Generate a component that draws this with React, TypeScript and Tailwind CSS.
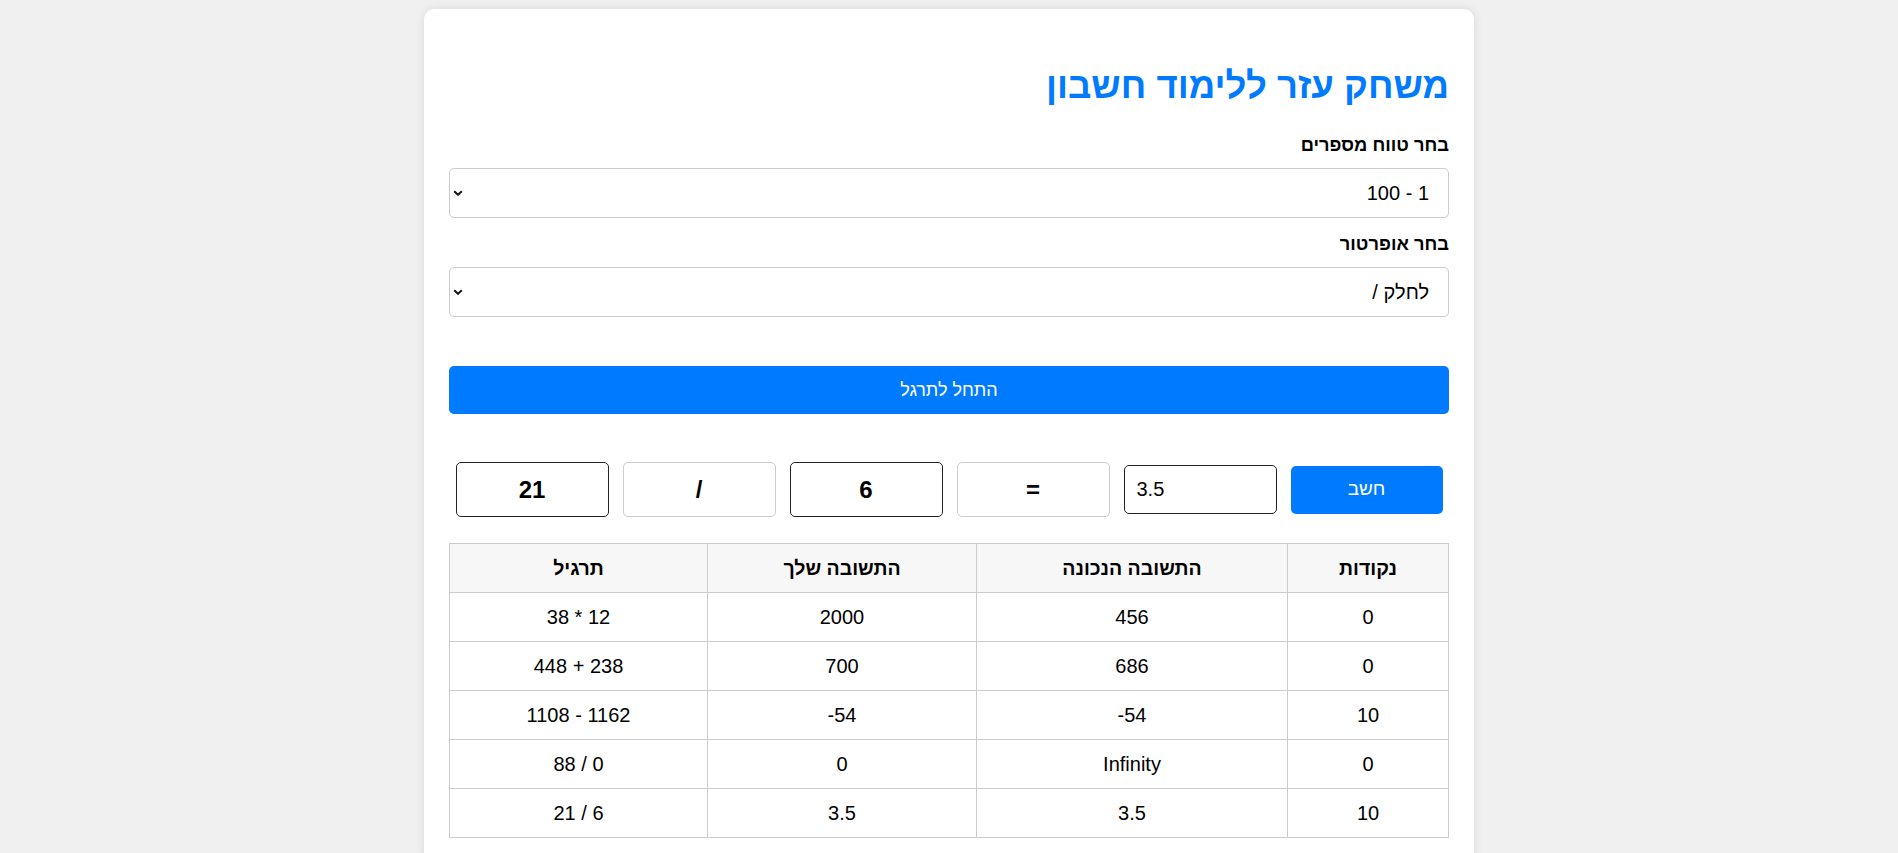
import React from "react";

const rows: [string, string, string, string][] = [
  ["0", "456", "2000", "38 * 12"],
  ["0", "686", "700", "448 + 238"],
  ["10", "-54", "-54", "1108 - 1162"],
  ["0", "Infinity", "0", "88 / 0"],
  ["10", "3.5", "3.5", "21 / 6"],
];

function Chevron() {
  return (
    <svg
      className="pointer-events-none absolute left-[4px] top-1/2 -translate-y-1/2"
      width="10"
      height="6"
      viewBox="0 0 10 6"
      fill="none"
    >
      <path d="M1.2 1.2L5 4.8L8.8 1.2" stroke="#111" strokeWidth="1.9" />
    </svg>
  );
}

function Field({ label, value }: { label: string; value: string }) {
  return (
    <div className="flex flex-col">
      <label className="mb-[12px] text-[18.3px] font-bold leading-[23px]">{label}</label>
      <div className="relative">
        <select
          className="h-[50px] w-full appearance-none rounded-[5px] border border-[#ccc] bg-white pr-[19px] text-[20px] text-black"
          defaultValue={value}
        >
          <option value={value}>{value}</option>
        </select>
        <Chevron />
      </div>
    </div>
  );
}

export default function App() {
  return (
    <div className="min-h-screen bg-[#f0f0f0] pt-[9px] font-['Liberation_Sans',Arial,'DejaVu_Sans',sans-serif] text-black">
      <div
        dir="rtl"
        className="mx-auto w-[1050px] rounded-[10px] bg-white px-[25px] pb-[25px] pt-[54px] shadow-[0_0_10px_rgba(0,0,0,0.1)]"
      >
        <h1 className="text-[36.5px] font-bold leading-[46px] text-[#007bff]">משחק עזר ללימוד חשבון</h1>

        <div className="mt-[24px]">
          <Field label="בחר טווח מספרים" value={"\u2066100 - 1\u2069"} />
        </div>
        <div className="mt-[14px]">
          <Field label="בחר אופרטור" value="לחלק /" />
        </div>

        <button className="mt-[49px] h-[48px] w-full rounded-[5px] bg-[#007bff] text-[18px] text-white">
          התחל לתרגל
        </button>

        <div className="mt-[48px] flex items-center justify-center gap-[14px]">
          <button className="h-[48px] w-[152px] rounded-[5px] bg-[#007bff] text-[19px] text-white">חשב</button>
          <input
            dir="ltr"
            readOnly
            value="3.5"
            className="h-[49px] w-[153px] rounded-[5px] border border-[#222] px-[12px] text-left text-[20px]"
          />
          <div className="flex h-[55px] w-[153px] items-center justify-center rounded-[5px] border border-[#ccc] text-[24px] font-bold">
            =
          </div>
          <div className="flex h-[55px] w-[153px] items-center justify-center rounded-[5px] border border-[#222] text-[24px] font-bold">
            6
          </div>
          <div className="flex h-[55px] w-[153px] items-center justify-center rounded-[5px] border border-[#ccc] text-[24px] font-bold">
            /
          </div>
          <div className="flex h-[55px] w-[153px] items-center justify-center rounded-[5px] border border-[#222] text-[24px] font-bold">
            21
          </div>
        </div>

        <table className="mt-[26px] w-full table-fixed border-collapse text-[20px]">
          <thead>
            <tr className="bg-[#f7f7f7]">
              <th className="w-[161px] border border-[#ccc] py-[12px] text-[19.5px] font-bold leading-[24px]">נקודות</th>
              <th className="w-[311px] border border-[#ccc] py-[12px] text-[19.5px] font-bold leading-[24px]">התשובה הנכונה</th>
              <th className="w-[269px] border border-[#ccc] py-[12px] text-[19.5px] font-bold leading-[24px]">התשובה שלך</th>
              <th className="border border-[#ccc] py-[12px] text-[19.5px] font-bold leading-[24px]">תרגיל</th>
            </tr>
          </thead>
          <tbody>
            {rows.map((r, i) => (
              <tr key={i}>
                {r.map((c, j) => (
                  <td key={j} className="border border-[#ccc] py-[12px] text-center leading-[24px]">
                    <span dir="ltr">{c}</span>
                  </td>
                ))}
              </tr>
            ))}
          </tbody>
        </table>
      </div>
    </div>
  );
}
